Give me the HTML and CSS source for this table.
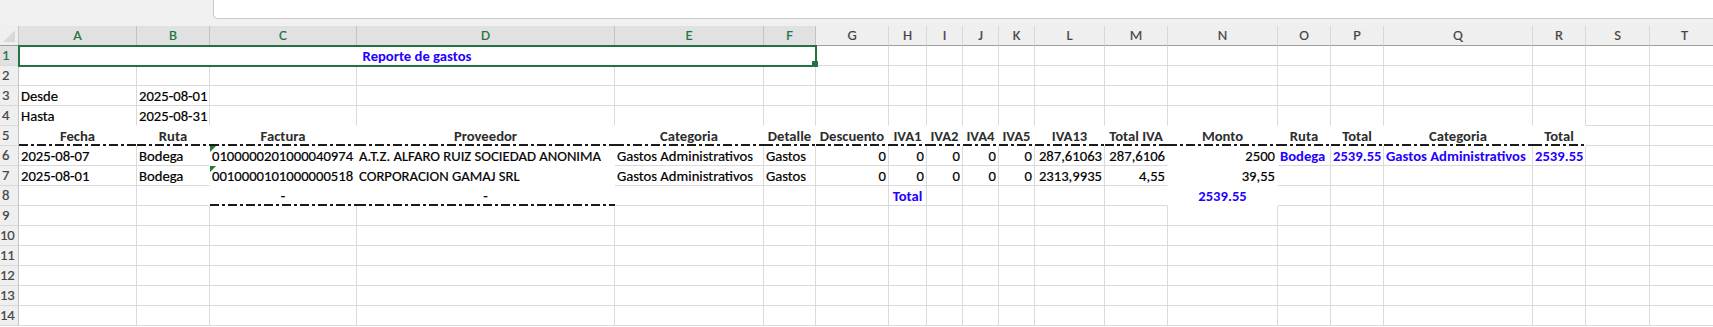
FILE: index.html
```html
<!DOCTYPE html>
<html lang="es">
<head>
<meta charset="utf-8">
<title>Reporte de gastos</title>
<link rel="stylesheet" href="styles.css">
</head>
<body>
<div class="top"><div class="fbar"></div></div>
<div class="sheet">
  <div class="corner"></div>
  <div class="ch s">A</div><div class="ch s">B</div><div class="ch s">C</div><div class="ch s">D</div><div class="ch s">E</div><div class="ch s">F</div>
  <div class="ch">G</div><div class="ch">H</div><div class="ch">I</div><div class="ch">J</div><div class="ch">K</div><div class="ch">L</div><div class="ch">M</div><div class="ch">N</div><div class="ch">O</div><div class="ch">P</div><div class="ch">Q</div><div class="ch">R</div><div class="ch">S</div><div class="ch">T</div>

  <div class="rh s">1</div>
  <div class="c title">Reporte de gastos<span class="handle"></span></div>
  <div class="c"></div><div class="c"></div><div class="c"></div><div class="c"></div><div class="c"></div><div class="c"></div><div class="c"></div><div class="c"></div><div class="c"></div><div class="c"></div><div class="c"></div><div class="c"></div><div class="c"></div><div class="c"></div>

  <div class="rh">2</div>
  <div class="c"></div><div class="c"></div><div class="c"></div><div class="c"></div><div class="c"></div><div class="c"></div><div class="c"></div><div class="c"></div><div class="c"></div><div class="c"></div><div class="c"></div><div class="c"></div><div class="c"></div><div class="c"></div><div class="c"></div><div class="c"></div><div class="c"></div><div class="c"></div><div class="c"></div><div class="c"></div>

  <div class="rh">3</div>
  <div class="c">Desde</div><div class="c">2025-08-01</div>
  <div class="c"></div><div class="c"></div><div class="c"></div><div class="c"></div><div class="c"></div><div class="c"></div><div class="c"></div><div class="c"></div><div class="c"></div><div class="c"></div><div class="c"></div><div class="c"></div><div class="c"></div><div class="c"></div><div class="c"></div><div class="c"></div><div class="c"></div><div class="c"></div>

  <div class="rh">4</div>
  <div class="c nb">Hasta</div><div class="c nb">2025-08-31</div>
  <div class="c nb"></div><div class="c nb"></div><div class="c nb"></div><div class="c nb"></div><div class="c nb"></div><div class="c nb"></div><div class="c nb"></div><div class="c nb"></div><div class="c nb"></div><div class="c nb"></div><div class="c nb"></div><div class="c nb"></div><div class="c nb"></div><div class="c nb"></div><div class="c nb"></div><div class="c nb"></div>
  <div class="c"></div><div class="c"></div>

  <div class="rh">5</div>
  <div class="c f dd hd">Fecha</div><div class="c f dd hd">Ruta</div><div class="c f dd hd">Factura</div><div class="c f dd hd">Proveedor</div><div class="c f dd hd">Categoria</div><div class="c f dd hd">Detalle</div><div class="c f dd hd">Descuento</div><div class="c f dd hd">IVA1</div><div class="c f dd hd">IVA2</div><div class="c f dd hd">IVA4</div><div class="c f dd hd">IVA5</div><div class="c f dd hd">IVA13</div><div class="c f dd hd">Total IVA</div><div class="c f dd hd">Monto</div><div class="c f dd hd">Ruta</div><div class="c f dd hd">Total</div><div class="c f dd hd">Categoria</div><div class="c f dd hd">Total</div>
  <div class="c"></div><div class="c"></div>

  <div class="rh">6</div>
  <div class="c">2025-08-07</div><div class="c nr">Bodega</div>
  <div class="c f tri">0100000201000040974</div><div class="c f">A.T.Z. ALFARO RUIZ SOCIEDAD ANONIMA</div>
  <div class="c">Gastos Administrativos</div><div class="c">Gastos</div>
  <div class="c r">0</div><div class="c r">0</div><div class="c r">0</div><div class="c r">0</div><div class="c r">0</div>
  <div class="c r">287,61063</div><div class="c r nr">287,6106</div><div class="c f r">2500</div>
  <div class="c sum">Bodega</div><div class="c sum">2539.55</div><div class="c sum">Gastos Administrativos</div><div class="c sum">2539.55</div>
  <div class="c"></div><div class="c"></div>

  <div class="rh">7</div>
  <div class="c">2025-08-01</div><div class="c nr">Bodega</div>
  <div class="c f tri">0010000101000000518</div><div class="c f">CORPORACION GAMAJ SRL</div>
  <div class="c">Gastos Administrativos</div><div class="c">Gastos</div>
  <div class="c r">0</div><div class="c r">0</div><div class="c r">0</div><div class="c r">0</div><div class="c r">0</div>
  <div class="c r">2313,9935</div><div class="c r nr">4,55</div><div class="c f r">39,55</div>
  <div class="c"></div><div class="c"></div><div class="c"></div><div class="c"></div><div class="c"></div><div class="c"></div>

  <div class="rh">8</div>
  <div class="c"></div><div class="c nr"></div>
  <div class="c f dd ctr">-</div><div class="c f dd ctr">-</div>
  <div class="c"></div><div class="c"></div><div class="c"></div>
  <div class="c sum ctr">Total</div>
  <div class="c"></div><div class="c"></div><div class="c"></div><div class="c"></div><div class="c nr"></div>
  <div class="c f sum ctr">2539.55</div>
  <div class="c"></div><div class="c"></div><div class="c"></div><div class="c"></div><div class="c"></div><div class="c"></div>

  <div class="rh">9</div>
  <div class="c"></div><div class="c"></div><div class="c"></div><div class="c"></div><div class="c"></div><div class="c"></div><div class="c"></div><div class="c"></div><div class="c"></div><div class="c"></div><div class="c"></div><div class="c"></div><div class="c"></div><div class="c"></div><div class="c"></div><div class="c"></div><div class="c"></div><div class="c"></div><div class="c"></div><div class="c"></div>

  <div class="rh">10</div>
  <div class="c"></div><div class="c"></div><div class="c"></div><div class="c"></div><div class="c"></div><div class="c"></div><div class="c"></div><div class="c"></div><div class="c"></div><div class="c"></div><div class="c"></div><div class="c"></div><div class="c"></div><div class="c"></div><div class="c"></div><div class="c"></div><div class="c"></div><div class="c"></div><div class="c"></div><div class="c"></div>

  <div class="rh">11</div>
  <div class="c"></div><div class="c"></div><div class="c"></div><div class="c"></div><div class="c"></div><div class="c"></div><div class="c"></div><div class="c"></div><div class="c"></div><div class="c"></div><div class="c"></div><div class="c"></div><div class="c"></div><div class="c"></div><div class="c"></div><div class="c"></div><div class="c"></div><div class="c"></div><div class="c"></div><div class="c"></div>

  <div class="rh">12</div>
  <div class="c"></div><div class="c"></div><div class="c"></div><div class="c"></div><div class="c"></div><div class="c"></div><div class="c"></div><div class="c"></div><div class="c"></div><div class="c"></div><div class="c"></div><div class="c"></div><div class="c"></div><div class="c"></div><div class="c"></div><div class="c"></div><div class="c"></div><div class="c"></div><div class="c"></div><div class="c"></div>

  <div class="rh">13</div>
  <div class="c"></div><div class="c"></div><div class="c"></div><div class="c"></div><div class="c"></div><div class="c"></div><div class="c"></div><div class="c"></div><div class="c"></div><div class="c"></div><div class="c"></div><div class="c"></div><div class="c"></div><div class="c"></div><div class="c"></div><div class="c"></div><div class="c"></div><div class="c"></div><div class="c"></div><div class="c"></div>

  <div class="rh">14</div>
  <div class="c"></div><div class="c"></div><div class="c"></div><div class="c"></div><div class="c"></div><div class="c"></div><div class="c"></div><div class="c"></div><div class="c"></div><div class="c"></div><div class="c"></div><div class="c"></div><div class="c"></div><div class="c"></div><div class="c"></div><div class="c"></div><div class="c"></div><div class="c"></div><div class="c"></div><div class="c"></div>
</div>
</body>
</html>
```
FILE: styles.css
```css
* { box-sizing: border-box; }
html, body { margin: 0; padding: 0; background: #fff; overflow: hidden; }
body {
  font-family: Carlito, Calibri, Lato, "Liberation Sans", sans-serif;
  font-size: 14.667px;
  color: #000;
  width: 1713px;
  height: 327px;
}

/* formula-bar strip */
.top { height: 26px; background: #f0f0f0; display: flex; }
.fbar {
  margin-left: 213px;
  flex: 1;
  height: 19px;
  background: #fff;
  border-left: 1px solid #c8c8c8;
  border-bottom: 1px solid #c8c8c8;
  border-bottom-left-radius: 5px;
}

/* the sheet grid */
.sheet {
  display: grid;
  grid-template-columns: 19px 118px 73px 147px 258px 149px 52px 73px 38px 36px 36px 36px 70px 63px 110px 53px 53px 149px 53px 64px 70px;
  grid-auto-rows: 20px;
}

.corner {
  background: #efefef;
  border-right: 1px solid #c4c4c4;
  border-bottom: 1px solid #9e9e9e;
  position: relative;
}
.corner::after {
  content: "";
  position: absolute;
  right: 3px;
  bottom: 3px;
  border-left: 12px solid transparent;
  border-bottom: 12px solid #d9d9d9;
}

.ch {
  background: #efefef;
  border-right: 1px solid #d8d8d8;
  border-bottom: 1px solid #9e9e9e;
  color: #444;
  text-align: center;
  line-height: 19px;
  white-space: nowrap;
  overflow: hidden;
  -webkit-text-stroke: 0.2px currentColor;
}
.ch.s {
  background: #e1e1e1;
  color: #217346;
  border-right-color: #c3c3c3;
}

.rh {
  background: #efefef;
  border-right: 1px solid #c4c4c4;
  border-bottom: 1px solid #d9d9d9;
  color: #444;
  text-align: center;
  padding-right: 7px;
  line-height: 19px;
  letter-spacing: -0.3px;
  white-space: nowrap;
  -webkit-text-stroke: 0.2px currentColor;
}
.rh.s { background: #e1e1e1; color: #217346; }

.c {
  border-right: 1px solid #dadada;
  border-bottom: 1px solid #dadada;
  padding: 2px 2px 0 2px;
  line-height: 17px;
  white-space: nowrap;
  -webkit-text-stroke: 0.2px currentColor;
}
.c.nr { border-right-color: transparent; }
.c.nb { border-bottom-color: transparent; }
.c.f { border-right-color: transparent; border-bottom-color: transparent; }

.c.dd {
  border-bottom-color: transparent;
  background-image: repeating-linear-gradient(90deg, #1a1a1a 0 9px, transparent 9px 12px, #1a1a1a 12px 15px, transparent 15px 18px);
  background-size: 100% 2px;
  background-position: left bottom;
  background-repeat: no-repeat;
  background-origin: border-box;
}

.r { text-align: right; }
.ctr { text-align: center; }
.hd { font-weight: bold; text-align: center; color: #2e2e2e; -webkit-text-stroke: 0; }
.sum { font-weight: bold; color: #2400ff; -webkit-text-stroke: 0; }

.tri { position: relative; }
.tri::before {
  content: "";
  position: absolute;
  left: 0;
  top: 0;
  border-top: 6px solid #1e7d32;
  border-right: 6px solid transparent;
}

.title {
  grid-column: span 6;
  position: relative;
  z-index: 1;
  text-align: center;
  font-weight: bold;
  color: #2400ff;
  outline: 2px solid #217346;
  outline-offset: -1px;
  -webkit-text-stroke: 0;
}
.handle {
  position: absolute;
  right: -3px;
  bottom: -2px;
  width: 6px;
  height: 6px;
  background: #217346;
}
```
